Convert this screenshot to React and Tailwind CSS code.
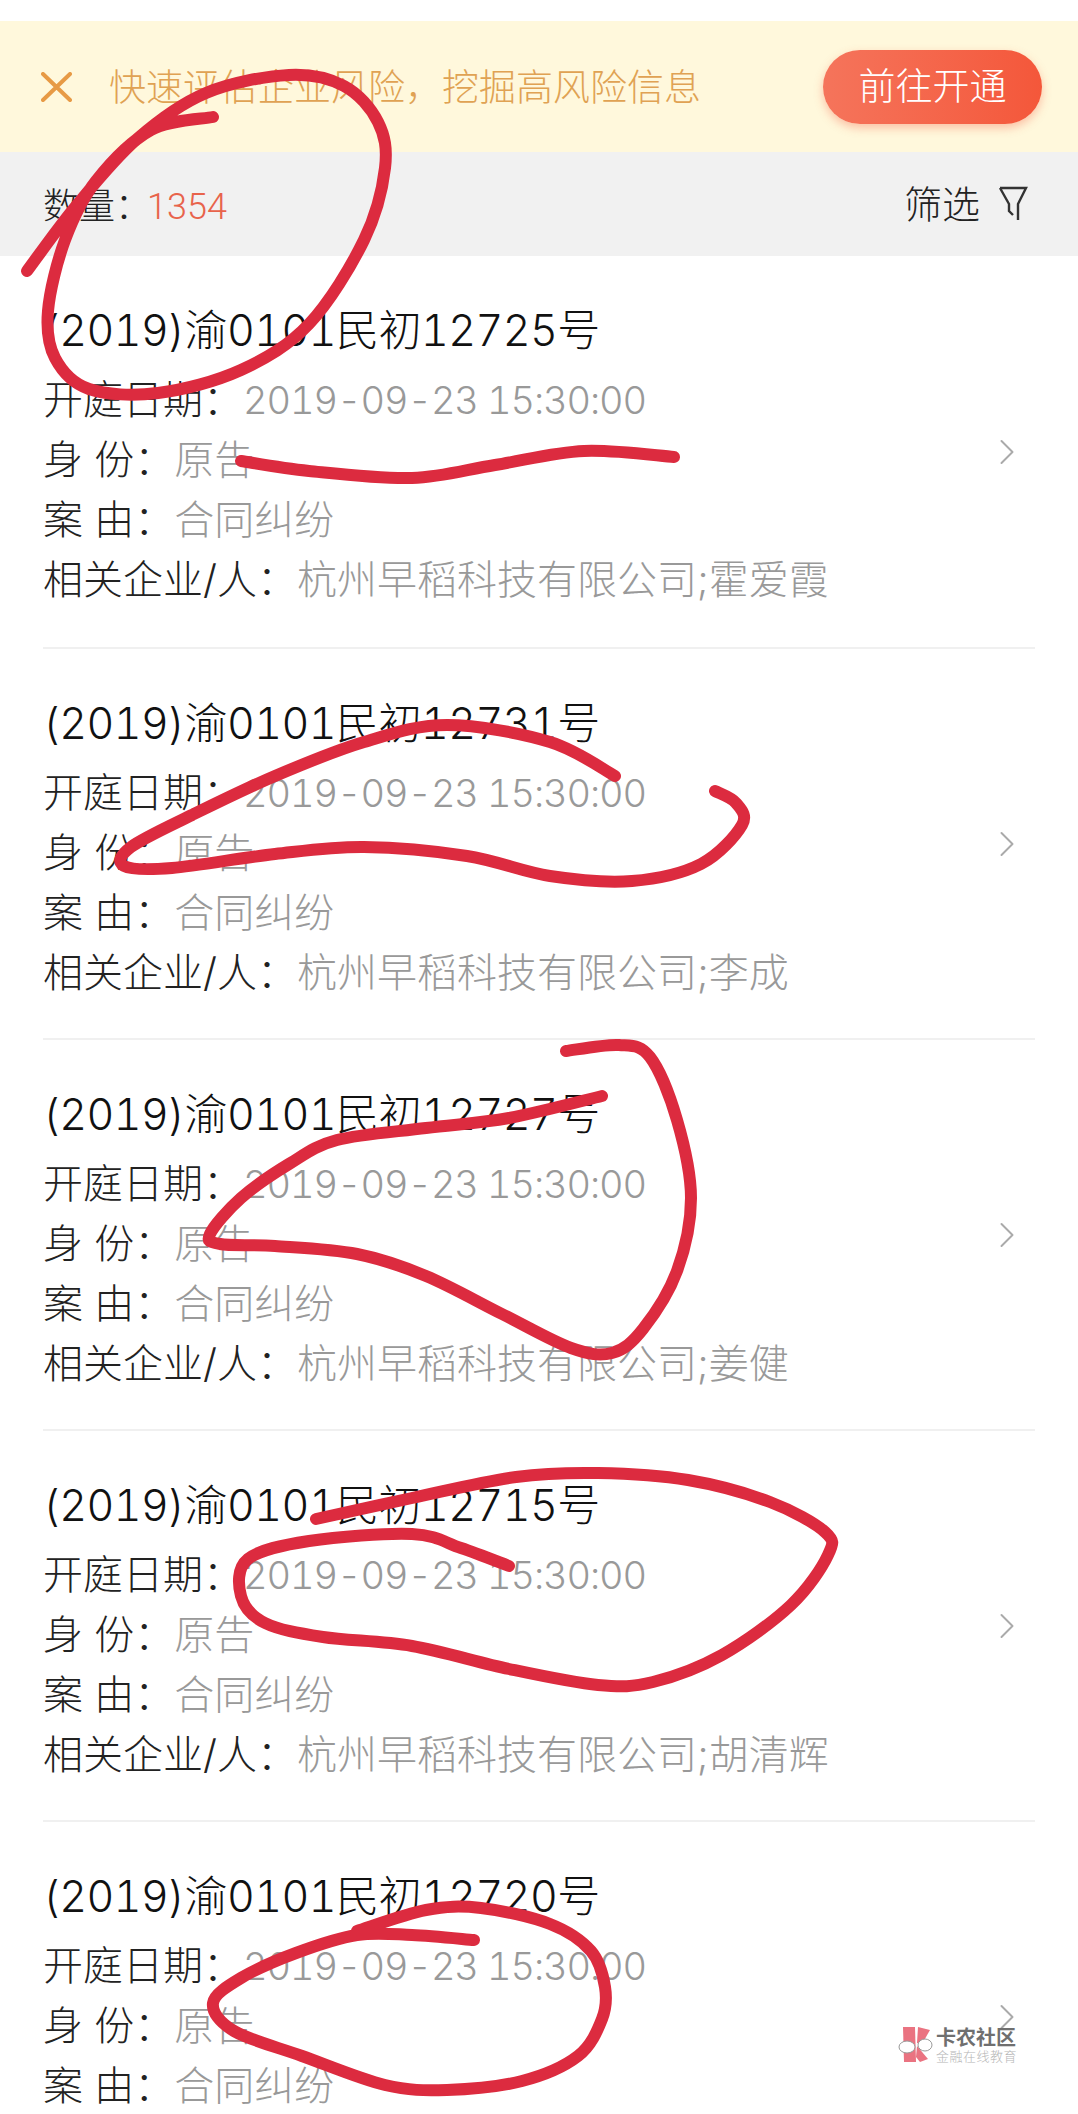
import React from 'react';
import { ChevronRight } from 'lucide-react';

const cases = [
  { no: '(2019)渝0101民初12725号', people: '杭州早稻科技有限公司;霍爱霞' },
  { no: '(2019)渝0101民初12731号', people: '杭州早稻科技有限公司;李成' },
  { no: '(2019)渝0101民初12727号', people: '杭州早稻科技有限公司;姜健' },
  { no: '(2019)渝0101民初12715号', people: '杭州早稻科技有限公司;胡清辉' },
  { no: '(2019)渝0101民初12720号' },
];

// hand-drawn red marks, page coordinates
const strokes = [
  [[27, 271], [76, 206], [137, 139], [206, 93], [289, 75], [344, 86], [378, 122], [385, 168], [364, 240], [309, 324], [241, 370], [158, 393], [89, 389], [55, 358], [48, 311], [65, 240], [96, 181], [151, 130], [213, 117]],
  [[241, 461], [309, 471], [412, 478], [495, 465], [584, 451], [674, 457]],
  [[615, 776], [550, 742], [447, 725], [364, 742], [275, 776], [192, 815], [131, 847], [124, 866], [172, 868], [275, 854], [364, 847], [467, 856], [550, 876], [632, 881], [701, 864], [742, 825], [736, 803], [715, 791]],
  [[566, 1051], [619, 1045], [650, 1057], [677, 1120], [691, 1198], [677, 1271], [643, 1329], [612, 1353], [571, 1348], [502, 1314], [426, 1276], [357, 1254], [275, 1246], [220, 1244], [210, 1234], [241, 1198], [289, 1164], [337, 1140], [426, 1128], [509, 1118], [602, 1096]],
  [[316, 1519], [412, 1498], [516, 1477], [598, 1473], [688, 1480], [770, 1502], [825, 1532], [828, 1555], [791, 1605], [722, 1655], [653, 1682], [598, 1685], [509, 1669], [412, 1646], [323, 1637], [265, 1623], [241, 1596], [248, 1559], [309, 1541], [412, 1534], [461, 1548], [509, 1566]],
  [[474, 1940], [412, 1935], [357, 1935], [296, 1953], [241, 1978], [213, 2003], [234, 2031], [302, 2056], [385, 2085], [447, 2090], [522, 2081], [578, 2056], [602, 2019], [605, 1987], [591, 1951], [550, 1924], [481, 1908], [426, 1910], [357, 1931]],
];

const smooth = (pts) => {
  let d = `M${pts[0][0]} ${pts[0][1]}`;
  for (let i = 0; i < pts.length - 1; i++) {
    const p0 = pts[i - 1] || pts[i];
    const p1 = pts[i];
    const p2 = pts[i + 1];
    const p3 = pts[i + 2] || p2;
    const c1x = p1[0] + (p2[0] - p0[0]) / 6;
    const c1y = p1[1] + (p2[1] - p0[1]) / 6;
    const c2x = p2[0] - (p3[0] - p1[0]) / 6;
    const c2y = p2[1] - (p3[1] - p1[1]) / 6;
    d += ` C${c1x} ${c1y} ${c2x} ${c2y} ${p2[0]} ${p2[1]}`;
  }
  return d;
};

const Row = ({ label, children }) => (
  <div className="flex h-[60px] items-center text-[40px] text-[#222222]">
    <span className="whitespace-pre">{label}</span>
    <span className="text-[#999999]">{children}</span>
  </div>
);

const CaseItem = ({ item, first }) => (
  <div className={`flex h-[391px] items-center justify-between ${first ? '' : 'border-t-2 border-[#f0f0f0]'}`}>
    <div className="flex flex-col self-start pt-[44px] font-['Inter','Noto_Sans_CJK_SC',sans-serif]">
      <div className="mb-[10px] flex h-[60px] items-center text-[43px] tracking-[-0.55px] text-[#111111] tabular-nums">{item.no}</div>
      <Row label="开庭日期："><span className="text-[38px] tracking-[-1.1px] tabular-nums">2019-09-23 15:30:00</span></Row>
      <Row label="身 份：">原告</Row>
      <Row label="案 由：">合同纠纷</Row>
      {item.people && <Row label="相关企业/人：">{item.people}</Row>}
    </div>
    <ChevronRight size={44} strokeWidth={1.1} className="mr-[6px] text-[#aaaaaa]" />
  </div>
);

export default function App() {
  return (
    <div className="relative h-[2114px] overflow-hidden bg-white pt-[21px] font-['Roboto','Noto_Sans_CJK_SC',sans-serif] font-light">
      <div className="flex h-[131px] items-center justify-between bg-[#fff8dc] pl-[41px] pr-[36px]">
        <div className="flex items-center">
          <svg width="31" height="30" viewBox="0 0 31 30" fill="none" stroke="#e79a45" strokeWidth="4" strokeLinecap="round">
            <path d="M2 2L29 28M29 2L2 28" />
          </svg>
          <span className="ml-[37px] pt-[5px] text-[37px] text-[#e0a253]">快速评估企业风险，挖掘高风险信息</span>
        </div>
        <button className="h-[74px] w-[219px] rounded-full bg-gradient-to-r from-[#f5745b] to-[#f4573a] pt-[2px] text-[37px] text-white shadow-[0_4px_10px_rgba(244,90,60,0.35)]">
          前往开通
        </button>
      </div>

      <div className="flex h-[104px] items-center justify-between bg-[#f1f1f1] pl-[43px] pr-[50px]">
        <div className="flex items-center pt-[5px] text-[36px] text-[#222222]">
          数量：<span className="ml-[-4px] text-[#e8634b]">1354</span>
        </div>
        <div className="flex items-center pt-[3px] text-[38px] text-[#222222]">
          筛选
          <svg width="30" height="36" viewBox="0 0 30 36" fill="none" stroke="#333333" strokeWidth="2.4" className="ml-[18px] mt-[-4px]">
            <path d="M2 2H28L20 18V34M2 2L11 18V25L15 29" />
          </svg>
        </div>
      </div>

      <div className="mx-[43px]">
        {cases.map((item, i) => (
          <CaseItem key={item.no} item={item} first={i === 0} />
        ))}
      </div>

      {/* red pen marks over the screenshot */}
      <svg className="absolute left-0 top-0 pointer-events-none" width="1078" height="2114" fill="none" stroke="#dc2b3f" strokeWidth="12" strokeLinecap="round" strokeLinejoin="round">
        {strokes.map((pts, i) => (
          <path key={i} d={smooth(pts)} />
        ))}
      </svg>

      {/* watermark */}
      <div className="absolute left-[898px] top-[2027px] flex items-start">
        <svg width="36" height="36" viewBox="0 0 36 36">
          <path d="M5 0H17L18 35H6Z" fill="#ea7381" />
          <path d="M20 0L32 3L24 17L19 16Z" fill="#ea7381" />
          <path d="M19 19L30 32L22 35L18 30Z" fill="#ea7381" />
          <ellipse cx="9" cy="20" rx="8" ry="6" fill="#fff" stroke="#999" strokeWidth="1" />
          <ellipse cx="27" cy="18" rx="7" ry="6" fill="#fff" stroke="#999" strokeWidth="1" />
        </svg>
        <div className="ml-[2px] flex flex-col">
          <span className="text-[20px] leading-[22px] font-bold text-[#6f6f6f]">卡农社区</span>
          <span className="mt-[1px] text-[13px] leading-[14px] tracking-[0.5px] text-[#b5b5b5]">金融在线教育</span>
        </div>
      </div>
    </div>
  );
}
